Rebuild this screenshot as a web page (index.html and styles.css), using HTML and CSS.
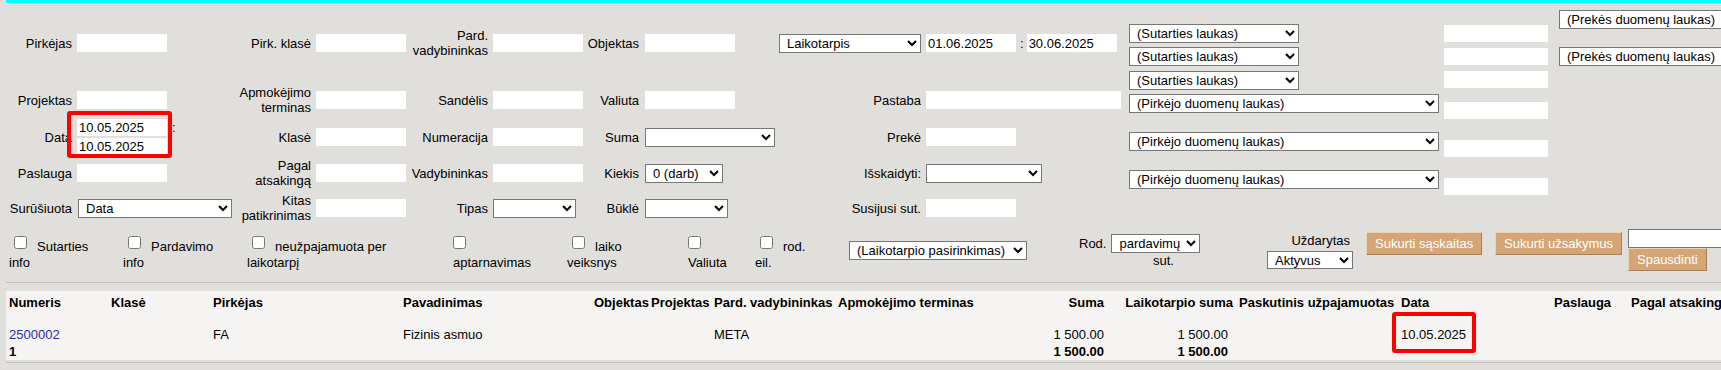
FILE: index.html
```html
<!DOCTYPE html>
<html lang="lt">
<head>
    <meta charset="UTF-8">
    <meta name="viewport" content="width=device-width, initial-scale=1.0">
    <title>Sutartys</title>
    <link rel="stylesheet" href="styles.css">
</head>
<body>

    <div class="topbar"></div>

    <form class="filters">
        <div class="upper">
            <div class="grid">
                <!-- 1 eilute -->
                <label class="lbl">Pirkėjas</label>
                <div class="fld"><input class="inp"></div>
                <label class="lbl">Pirk. klasė</label>
                <div class="fld"><input class="inp"></div>
                <label class="lbl">Pard. vadybininkas</label>
                <div class="fld"><input class="inp"></div>
                <label class="lbl l4">Objektas</label>
                <div class="fld"><input class="inp"></div>
                <div class="lbl"><select class="sel w-period"><option>Laikotarpis</option></select></div>
                <div class="fld">
                    <input class="inp" value="01.06.2025"><span class="sep">:</span><input class="inp" value="30.06.2025">
                </div>

                <!-- 2 eilute -->
                <label class="lbl">Projektas</label>
                <div class="fld"><input class="inp"></div>
                <label class="lbl">Apmokėjimo terminas</label>
                <div class="fld"><input class="inp"></div>
                <label class="lbl">Sandėlis</label>
                <div class="fld"><input class="inp"></div>
                <label class="lbl l4">Valiuta</label>
                <div class="fld"><input class="inp"></div>
                <label class="lbl">Pastaba</label>
                <div class="fld"><input class="inp wide"></div>

                <!-- 3 eilute -->
                <label class="lbl">Data</label>
                <div class="fld">
                    <div class="dates">
                        <input class="inp short" value="10.05.2025">
                        <input class="inp short" value="10.05.2025">
                        <span class="mark mark-dates"></span>
                    </div>
                    <span class="sep top">:</span>
                </div>
                <label class="lbl">Klasė</label>
                <div class="fld"><input class="inp"></div>
                <label class="lbl">Numeracija</label>
                <div class="fld"><input class="inp"></div>
                <label class="lbl l4">Suma</label>
                <div class="fld"><select class="sel w-sum"><option></option></select></div>
                <label class="lbl">Prekė</label>
                <div class="fld"><input class="inp"></div>

                <!-- 4 eilute -->
                <label class="lbl">Paslauga</label>
                <div class="fld"><input class="inp"></div>
                <label class="lbl">Pagal atsakingą</label>
                <div class="fld"><input class="inp"></div>
                <label class="lbl">Vadybininkas</label>
                <div class="fld"><input class="inp"></div>
                <label class="lbl l4">Kiekis</label>
                <div class="fld"><select class="sel w-qty"><option>0 (darb)</option></select></div>
                <label class="lbl">Išskaidyti:</label>
                <div class="fld"><select class="sel w-split"><option></option></select></div>

                <!-- 5 eilute -->
                <label class="lbl">Surūšiuota</label>
                <div class="fld"><select class="sel w-sort"><option>Data</option></select></div>
                <label class="lbl">Kitas patikrinimas</label>
                <div class="fld"><input class="inp"></div>
                <label class="lbl">Tipas</label>
                <div class="fld"><select class="sel w-type"><option></option></select></div>
                <label class="lbl l4">Būklė</label>
                <div class="fld"><select class="sel w-type"><option></option></select></div>
                <label class="lbl">Susijusi sut.</label>
                <div class="fld"><input class="inp"></div>
            </div>

            <div class="col-fields">
                <select class="sel w-contract"><option>(Sutarties laukas)</option></select>
                <select class="sel w-contract"><option>(Sutarties laukas)</option></select>
                <select class="sel w-contract"><option>(Sutarties laukas)</option></select>
                <select class="sel w-buyer"><option>(Pirkėjo duomenų laukas)</option></select>
                <select class="sel w-buyer gap-l"><option>(Pirkėjo duomenų laukas)</option></select>
                <select class="sel w-buyer gap-l"><option>(Pirkėjo duomenų laukas)</option></select>
            </div>

            <div class="col-values">
                <input class="inp val">
                <input class="inp val">
                <input class="inp val">
                <input class="inp val gap-m">
                <input class="inp val gap-l">
                <input class="inp val gap-l">
            </div>

            <div class="col-items">
                <select class="sel w-item"><option>(Prekės duomenų laukas)</option></select>
                <select class="sel w-item"><option>(Prekės duomenų laukas)</option></select>
            </div>
        </div>

        <div class="options">
            <label class="opt"><input type="checkbox">Sutarties<br>info</label>
            <label class="opt"><input type="checkbox">Pardavimo<br>info</label>
            <label class="opt"><input type="checkbox">neužpajamuota per<br>laikotarpį</label>
            <label class="opt solo"><input type="checkbox"><br>aptarnavimas</label>
            <label class="opt"><input type="checkbox">laiko<br>veiksnys</label>
            <label class="opt solo"><input type="checkbox"><br>Valiuta</label>
            <label class="opt"><input type="checkbox">rod.<br>eil.</label>

            <div class="opt-period"><select class="sel w-choose"><option>(Laikotarpio pasirinkimas)</option></select></div>

            <div class="opt-show">
                <div class="show-row">Rod. <select class="sel w-show"><option>pardavimų</option></select></div>
                <div class="show-sut">sut.</div>
            </div>

            <div class="opt-closed">
                <div class="closed-lbl">Uždarytas</div>
                <select class="sel w-closed"><option>Aktyvus</option></select>
            </div>

            <div class="opt-btn"><button type="button" class="btn">Sukurti sąskaitas</button></div>
            <div class="opt-btn"><button type="button" class="btn">Sukurti užsakymus</button></div>

            <div class="opt-print">
                <select class="sel w-print"><option></option></select>
                <button type="button" class="btn">Spausdinti</button>
            </div>
        </div>
    </form>

    <div class="results">
        <table class="list">
            <colgroup>
                <col style="width: 104px">
                <col style="width: 102px">
                <col style="width: 190px">
                <col style="width: 191px">
                <col style="width: 57px">
                <col style="width: 63px">
                <col style="width: 124px">
                <col style="width: 142px">
                <col style="width: 126px">
                <col style="width: 133px">
                <col style="width: 162px">
                <col style="width: 153px">
                <col style="width: 77px">
                <col style="width: 150px">
            </colgroup>
            <thead>
                <tr>
                    <th>Numeris</th>
                    <th>Klasė</th>
                    <th>Pirkėjas</th>
                    <th>Pavadinimas</th>
                    <th>Objektas</th>
                    <th>Projektas</th>
                    <th>Pard. vadybininkas</th>
                    <th>Apmokėjimo terminas</th>
                    <th class="num">Suma</th>
                    <th class="num sum2">Laikotarpio suma</th>
                    <th>Paskutinis užpajamuotas</th>
                    <th>Data</th>
                    <th>Paslauga</th>
                    <th>Pagal atsakingą</th>
                </tr>
            </thead>
            <tbody>
                <tr>
                    <td><a href="#" class="doc-link">2500002</a></td>
                    <td></td>
                    <td>FA</td>
                    <td>Fizinis asmuo</td>
                    <td></td>
                    <td></td>
                    <td>META</td>
                    <td></td>
                    <td class="num">1 500.00</td>
                    <td class="num inset">1 500.00</td>
                    <td></td>
                    <td class="marked">10.05.2025<span class="mark mark-cell"></span></td>
                    <td></td>
                    <td></td>
                </tr>
                <tr class="total">
                    <td>1</td>
                    <td></td>
                    <td></td>
                    <td></td>
                    <td></td>
                    <td></td>
                    <td></td>
                    <td></td>
                    <td class="num">1 500.00</td>
                    <td class="num inset">1 500.00</td>
                    <td></td>
                    <td></td>
                    <td></td>
                    <td></td>
                </tr>
            </tbody>
        </table>
    </div>

</body>
</html>
```

FILE: styles.css
```css
* {
    box-sizing: border-box;
}

html,
body {
    margin: 0;
    padding: 0;
}

body {
    font-family: "Liberation Sans", Arial, sans-serif;
    font-size: 13px;
    color: #000;
    background: #e0dfdc;
    padding-left: 6px;
    overflow: hidden;
}

.topbar {
    height: 3px;
    background: #00ffff;
}

/* laukai */

.inp {
    width: 90px;
    height: 18px;
    border: none;
    padding: 0 2px;
    margin: 0;
    background: #fff;
    font: inherit;
    color: #000;
    outline: none;
}

.inp.wide {
    width: 195px;
}

.inp.short {
    height: 17px;
}

.sel {
    height: 19px;
    border: 1px solid #767676;
    border-radius: 0;
    padding: 0 0 0 3px;
    margin: 0;
    background: #fff;
    font: inherit;
    color: #000;
}

.w-period { width: 142px; }
.w-sum { width: 130px; }
.w-qty { width: 78px; }
.w-split { width: 116px; }
.w-sort { width: 154px; margin-left: 1px; }
.w-type { width: 83px; }
.w-contract { width: 170px; }
.w-buyer { width: 310px; }
.w-item { width: 200px; }
.w-choose { width: 178px; }
.w-show { width: 89px; }
.w-closed { width: 86px; height: 18px; }
.w-print { width: 110px; }

.upper {
    display: flex;
    align-items: flex-start;
}

.grid {
    display: grid;
    grid-template-columns: 71px 158px 81px 90px 87px 90px 62px 134px 147px 195px;
    grid-template-rows: 74px 40px 34px 38px 32px;
    padding-top: 3px;
    align-items: center;
}

.lbl {
    text-align: right;
    padding-right: 5px;
    display: flex;
    justify-content: flex-end;
    align-items: center;
}

.lbl.l4 {
    padding-right: 6px;
}

.fld {
    display: flex;
    align-items: center;
}

.sep {
    padding: 0 3px 0 4px;
}

.sep.top {
    align-self: flex-start;
    line-height: 17px;
    padding-left: 5px;
}

.dates {
    position: relative;
    display: flex;
    flex-direction: column;
    gap: 2px;
}

.mark {
    position: absolute;
    border: 4px solid #ff0000;
    border-radius: 3px;
    pointer-events: none;
}

.mark-dates {
    left: -10px;
    top: -8px;
    width: 105px;
    height: 47px;
}

.col-fields {
    display: flex;
    flex-direction: column;
    align-items: flex-start;
    margin-left: 8px;
    padding-top: 21px;
    gap: 4px;
}

.col-fields .sel:nth-child(3) {
    margin-top: 1px;
}

.col-fields .gap-l {
    margin-top: 15px;
}

.col-values {
    display: flex;
    flex-direction: column;
    margin-left: 5px;
    padding-top: 22px;
    gap: 6px;
}

.inp.val {
    width: 104px;
    height: 17px;
}

.col-values .gap-m {
    margin-top: 8px;
}

.col-values .gap-l {
    margin-top: 15px;
}

.col-items {
    display: flex;
    flex-direction: column;
    margin-left: 11px;
    padding-top: 7px;
    gap: 18px;
}

/* varneles ir mygtukai */

.options {
    display: grid;
    grid-template-columns: 114px 124px 206px 114px 121px 67px 94px 230px 188px 99px 129px 133px 120px;
    height: 50px;
    padding-left: 3px;
    align-items: start;
}

.opt {
    line-height: 16px;
    padding-top: 12px;
}

.opt input {
    width: 13px;
    height: 13px;
    margin: 0 10px 0 5px;
    vertical-align: 2px;
}

.opt.solo input {
    margin-left: 0;
}

.opt-period {
    padding-top: 17px;
}

.opt-show {
    padding-top: 10px;
}

.show-row {
    display: flex;
    align-items: center;
    gap: 5px;
}

.show-sut {
    padding-left: 74px;
    line-height: 15px;
}

.opt-closed {
    width: 86px;
    padding-top: 9px;
}

.closed-lbl {
    text-align: right;
    padding-right: 3px;
    line-height: 15px;
    margin-bottom: 3px;
}

.opt-btn {
    padding-top: 8px;
}

.opt-print {
    display: flex;
    flex-direction: column;
    align-items: flex-start;
    padding-top: 5px;
}

.btn {
    height: 23px;
    padding: 0 8px;
    background: #d4a576;
    color: #fff;
    border: 1px solid;
    border-color: #ecd3b6 #a97f56 #a97f56 #ecd3b6;
    font: inherit;
    cursor: pointer;
}

/* sarasas */

.results {
    margin-top: 8px;
    border-top: 1px solid #c2c1bd;
    border-bottom: 1px solid #c2c1bd;
    padding: 8px 0 2px;
}

.list {
    width: 1774px;
    border-collapse: collapse;
    table-layout: fixed;
    background: #f5f4f2;
    font-size: 13px;
}

.list th,
.list td {
    padding: 0 1px;
    line-height: 17px;
    white-space: nowrap;
    text-align: left;
    vertical-align: top;
}

.list th:first-child,
.list td:first-child {
    padding-left: 3px;
}

.list th {
    padding-top: 3px;
    padding-bottom: 15px;
}

.list .num {
    text-align: right;
}

.list th.sum2 {
    padding-right: 5px;
}

.list td.inset {
    padding-right: 10px;
}

.total td {
    font-weight: bold;
}

.doc-link {
    color: #2b2bb3;
    text-decoration: none;
}

.marked {
    position: relative;
}

.mark-cell {
    left: -8px;
    top: -14px;
    width: 84px;
    height: 41px;
}
```
